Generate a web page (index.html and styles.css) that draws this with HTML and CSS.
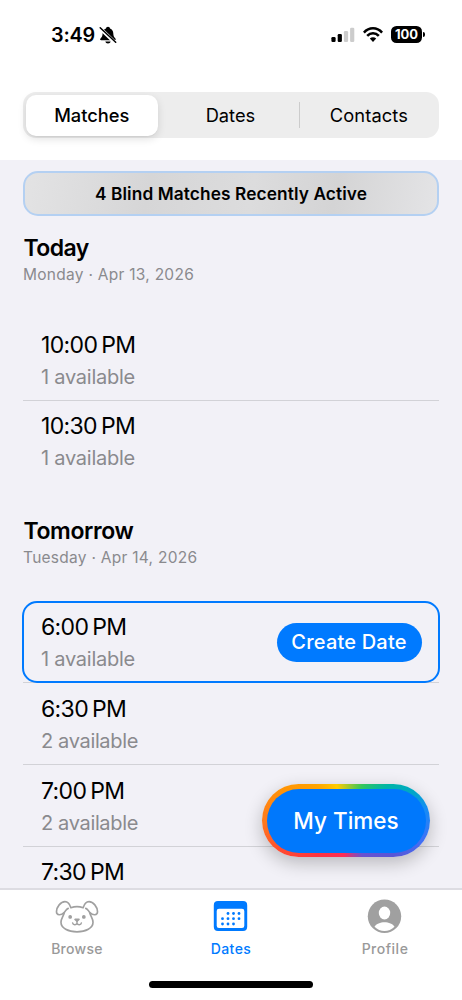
FILE: index.html
```html
<!DOCTYPE html>
<html lang="en">
<head>
<meta charset="utf-8">
<title>Dates</title>
<link rel="stylesheet" href="styles.css">
</head>
<body>
<div class="screen">
  <header class="header">
    <div class="status">
      <span class="clock">3:49</span>
      <svg class="bell" width="18" height="18" viewBox="0 0 18 18">
        <path d="M9 .8C7.9.8 7.1 1.500 7 2.500C4.700 3.300 3.700 5.200 3.600 7.500C3.500 10 3.100 11 1.700 12.300C.7 13.300 1 14.300 2.200 14.300H15.600C16.800 14.300 17.100 13.300 16.200 12.300C14.800 11 14.400 10 14.300 7.500C14.200 5.200 13.200 3.300 11 2.500C10.900 1.500 10.100.8 9 .8ZM6.300 15.400C6.600 16.600 7.600 17.400 9 17.400S11.400 16.600 11.700 15.400Z"/>
        <path d="M.8 2.100L16.500 17.100" stroke="#fff" stroke-width="3.600"/>
        <path d="M1.200 1.700L16.700 16.300" stroke="#000" stroke-width="1.500" stroke-linecap="round"/>
      </svg>
      <svg class="signal" width="24" height="16" viewBox="0 0 24 16">
        <rect x=".4" y="10" width="4.200" height="5" rx="1.200"/>
        <rect x="6.700" y="7" width="4.200" height="8" rx="1.200"/>
        <rect x="12.900" y="4" width="4.200" height="11" rx="1.200" fill="#ccc"/>
        <rect x="19.100" y=".8" width="4.200" height="14.200" rx="1.200" fill="#ccc"/>
      </svg>
      <svg class="wifi" width="20" height="16" viewBox="0 0 20 16">
        <g fill="none" stroke="#000" stroke-width="2.500">
          <path d="M.9 5.600C6-.1 14-.1 19.100 5.600"/>
          <path d="M4.200 8.900C7.500 5.300 12.500 5.300 15.800 8.900"/>
        </g>
        <path d="M6.800 11.600C8.600 9.900 11.400 9.900 13.200 11.600L10 14.900Z"/>
      </svg>
      <span class="battery">100</span><i class="battery-tip"></i>
    </div>
    <nav class="segments">
      <span class="segment selected"><b>Matches</b></span>
      <span class="segment dates-segment">Dates</span>
      <i class="divider"></i>
      <span class="segment contacts">Contacts</span>
    </nav>
  </header>

  <main class="content">
    <div class="banner"><span>4 Blind Matches Recently Active</span></div>

    <section class="day">
      <h2 class="today">Today</h2>
      <p class="full-date">Monday · Apr 13, 2026</p>
      <div class="slots">
        <div class="slot"><div><p class="time">10:00<i></i>PM</p><p class="count">1 available</p></div></div>
        <div class="slot last"><div><p class="time">10:30<i></i>PM</p><p class="count">1 available</p></div></div>
      </div>
    </section>

    <section class="day">
      <h2 class="tomorrow">Tomorrow</h2>
      <p class="full-date">Tuesday · Apr 14, 2026</p>
      <div class="slots">
        <div class="slot active"><div><p class="time">6:00<i></i>PM</p><p class="count">1 available</p></div><span class="create"><b>Create Date</b></span></div>
        <div class="slot"><div><p class="time">6:30<i></i>PM</p><p class="count two">2 available</p></div></div>
        <div class="slot"><div><p class="time">7:00<i></i>PM</p><p class="count two">2 available</p></div></div>
        <div class="slot last"><div><p class="time">7:30<i></i>PM</p></div></div>
      </div>
    </section>
  </main>

  <div class="my-times"><div class="my-times-face"><span>My Times</span></div></div>

  <footer class="tabs">
    <div class="tab">
      <svg width="44" height="34" viewBox="-.5 -.7 45 34.800" fill="none" stroke="#a0a0a0" stroke-width="1.700" stroke-linecap="round" stroke-linejoin="round">
        <path d="M15.700 7.200C14.200 2.500 12.200 1 9.700 1C5.200 1 1.200 6.400 1 11.200C.9 15.400 5.800 15.100 8.800 12.200C10.700 10.300 10.700 8.600 13 7.900M28.300 7.200C29.800 2.500 31.800 1 34.300 1C38.800 1 42.800 6.400 43 11.200C43.100 15.400 38.200 15.100 35.200 12.200C33.300 10.300 33.300 8.600 31 7.900M15.700 7.200C19.500 5.900 24.500 5.900 28.300 7.200"/>
        <path d="M8.900 12.400C8.300 15.800 5.600 18.200 5.600 22.200C5.600 28.200 13 31.900 22 31.900S38.400 28.200 38.400 22.200C38.400 18.200 35.700 15.800 35.100 12.400"/>
        <circle cx="15" cy="16.600" r="1.300" fill="#a0a0a0" stroke-width="1.200"/>
        <circle cx="29" cy="16.600" r="1.300" fill="#a0a0a0" stroke-width="1.200"/>
        <path d="M20 19.200H24L22 21Z" fill="#a0a0a0"/>
        <path stroke-width="1.500" d="M22 20V22.800M17.500 22.800C18 25.200 21.200 25.300 22 23.100C22.800 25.300 26 25.200 26.500 22.800"/>
      </svg>
      <span class="browse">Browse</span>
    </div>
    <div class="tab current">
      <svg width="44" height="34" viewBox=".5 0 44 34" fill="#007aff">
        <path fill-rule="evenodd" d="M9.500 1H34.500Q38.700 1 38.700 5.200V26.800Q38.700 31 34.500 31H9.500Q5.300 31 5.300 26.800V5.200Q5.300 1 9.500 1ZM10.500 8.700Q8.200 8.700 8.200 11V25.800Q8.200 28.100 10.500 28.100H33.500Q35.800 28.100 35.800 25.800V11Q35.800 8.700 33.500 8.700Z"/>
        <circle cx="19.500" cy="13.500" r="1.400"/><circle cx="25" cy="13.500" r="1.400"/><circle cx="30.500" cy="13.500" r="1.400"/>
        <circle cx="14" cy="18.700" r="1.400"/><circle cx="19.500" cy="18.700" r="1.400"/><circle cx="25" cy="18.700" r="1.400"/><circle cx="30.500" cy="18.700" r="1.400"/>
        <circle cx="14" cy="24" r="1.400"/><circle cx="19.500" cy="24" r="1.400"/><circle cx="25" cy="24" r="1.400"/>
      </svg>
      <span class="dates">Dates</span>
    </div>
    <div class="tab">
      <svg width="44" height="34" viewBox=".5 0 44 34">
        <circle cx="22" cy="16.300" r="16.700" fill="#a0a0a0"/>
        <ellipse cx="22" cy="13" rx="5.700" ry="6.400" fill="#fff"/>
        <path d="M12 26.700C15.300 20.700 28.700 20.700 32 26.700C26.600 32.300 17.400 32.300 12 26.700Z" fill="#fff"/>
      </svg>
      <span class="profile">Profile</span>
    </div>
    <i class="home"></i>
  </footer>
</div>
</body>
</html>
```
FILE: styles.css
```css
* { box-sizing: border-box; }
body { margin: 0; font-family: Inter, "Liberation Sans", sans-serif; color: #000; }
h2, p { margin: 0; white-space: nowrap; }
b { font-weight: inherit; }
.screen { position: relative; display: flex; flex-direction: column; width: 462px; height: 1000px; overflow: hidden; background: #f2f1f7; }

.header { flex: none; height: 160px; background: #fff; padding: 22px 23px 0; }
.status { display: flex; align-items: center; height: 25px; padding-left: 28px; }
.clock { width: 47.500px; font-size: 19.800px; font-weight: 600; letter-spacing: -.2px; }
.bell { flex: none; }
.signal { margin-left: auto; }
.wifi { margin-left: 8px; }
.battery { margin-left: 8px; width: 31px; height: 17px; border-radius: 5.500px; background: #000; color: #fff; font-size: 13px; font-weight: 700; line-height: 17px; text-align: center; }
.battery-tip { width: 2px; height: 5px; margin: 0 14px 0 1px; border-radius: 0 2px 2px 0; background: #000; }

.segments { display: flex; align-items: center; height: 46px; margin-top: 45px; padding: 3px; border-radius: 13px; background: #ededed; }
.segment { flex: 1; text-align: center; font-size: 18.300px; line-height: 41px; white-space: nowrap; }
.dates-segment { flex: none; width: 136.900px; }
.contacts { padding-left: 2px; letter-spacing: .1px; }
.selected { flex: none; width: 131.500px; margin-right: 4.500px; border-radius: 10px; background: #fff; font-weight: 500; box-shadow: 0 3px 8px rgba(0,0,0,.12), 0 1px 1px rgba(0,0,0,.04); }
.divider { width: 1px; height: 26px; background: #ccc; }

.content { flex: 1; min-height: 0; overflow: hidden; padding: 11px 23px 0; }
.banner { height: 45px; border: 2px solid #b4d0f2; border-radius: 15px; background: linear-gradient(100deg, #e3e3e4 0%, #d6d6d7 30%, #dcdcdd 55%, #d4d4d5 75%, #e4e4e6 100%); font-size: 17.300px; font-weight: 600; letter-spacing: .1px; line-height: 41px; text-align: center; }
.day { height: 282.500px; padding-top: 18px; }
.day h2 { height: 29px; padding-left: .5px; font-size: 23px; line-height: 29px; font-weight: 600; }
.today { letter-spacing: -.6px; }
.tomorrow { letter-spacing: -.4px; }
.full-date { height: 22px; font-size: 15.500px; line-height: 23px; letter-spacing: .27px; color: #8a8a8e; }
.slots { margin-top: 34px; }
.slot { display: flex; justify-content: space-between; height: 81.800px; padding: 10.500px 18px 0; border-bottom: 1px solid #d2d2d7; }
.last { border-color: transparent; }
.active { position: relative; }
.active::after { content: ""; position: absolute; inset: -1px; border: 2px solid #007aff; border-radius: 15px; }
.time { display: flex; font-size: 23px; line-height: 31px; letter-spacing: -.65px; }
.time i { width: 4px; }
.count { font-size: 20px; line-height: 32px; letter-spacing: -.25px; color: #8a8a8e; }
.two { letter-spacing: -.35px; }
.create { width: 145px; height: 39px; margin: 10.500px -.5px 0 0; border-radius: 20px; background: #007aff; color: #fff; font-size: 20px; font-weight: 500; letter-spacing: .2px; line-height: 39px; text-align: center; white-space: nowrap; }

.my-times { position: absolute; left: 262px; top: 784px; width: 168px; height: 73px; padding: 4.500px; border-radius: 37px; background: conic-gradient(from 0deg, #b7c924 0deg, #34c759 25deg, #00b5a5 50deg, #00a7c7 67deg, #168cf5 82deg, #4070f5 105deg, #5856d6 125deg, #6b52cf 155deg, #ff2d55 184deg, #ff3440 220deg, #ff4a31 245deg, #ff7b1c 270deg, #ff9505 298deg, #ffa500 320deg, #ffcc00 345deg, #b7c924 360deg); box-shadow: 0 6px 18px rgba(0,0,0,.24); }
.my-times-face { height: 100%; border-radius: 32px; background: #0078fc; color: #fff; font-size: 22.500px; font-weight: 500; line-height: 64px; text-align: center; }

.tabs { position: relative; flex: none; display: flex; height: 112px; padding-top: 10px; border-top: 2px solid #dddce2; background: #fff; }
.tab { flex: 1; display: flex; flex-direction: column; align-items: center; color: #999; font-size: 14px; font-weight: 500; line-height: 18px; }
.tab svg { flex: none; margin-bottom: 6px; overflow: visible; }
.browse { letter-spacing: .3px; }
.dates { letter-spacing: .45px; }
.profile { letter-spacing: .5px; }
.current { color: #007aff; }
.home { position: absolute; left: 149px; bottom: 12px; width: 164px; height: 7px; border-radius: 4px; background: #000; }
```
